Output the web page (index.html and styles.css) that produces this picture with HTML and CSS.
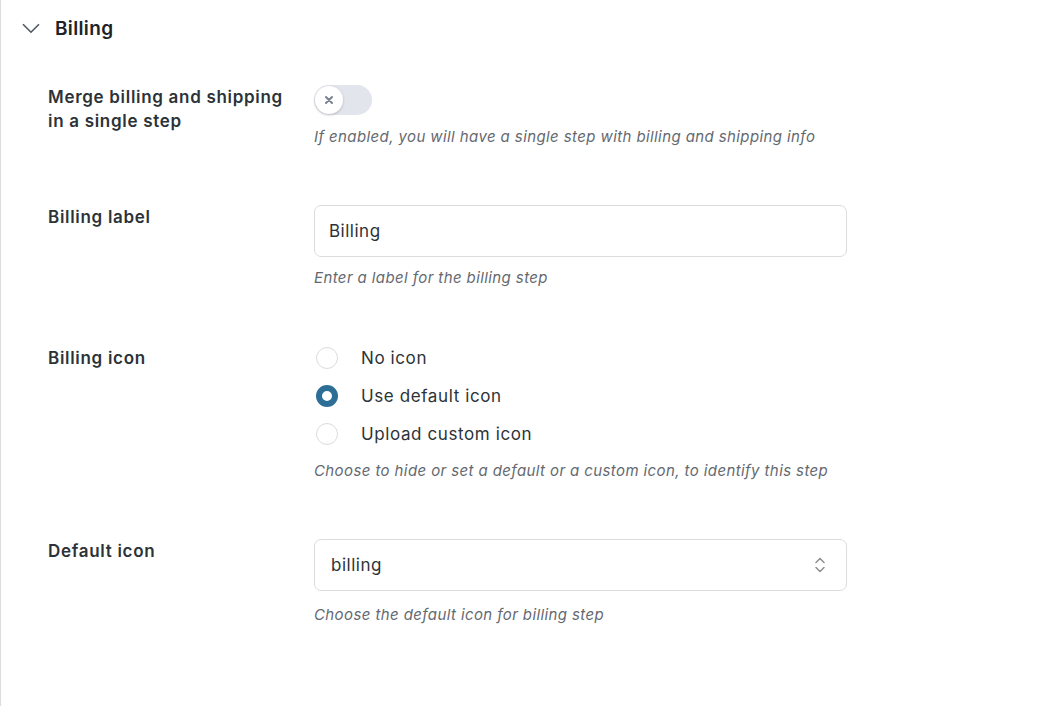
FILE: index.html
```html
<!DOCTYPE html>
<html lang="en">
<head>
<meta charset="utf-8">
<title>Billing settings</title>
<link rel="stylesheet" href="styles.css">
</head>
<body>
<div class="panel">
  <div class="section-head">
    <svg class="chevron" width="18" height="11" viewBox="0 0 18 11"><path d="M1 1.2 L9 9.2 L17 1.2" fill="none" stroke="#50575e" stroke-width="1.6"/></svg>
    <h2 class="section-title">Billing</h2>
  </div>

  <div class="rows">
    <div class="row">
      <div class="label">Merge billing and shipping in a single step</div>
      <div class="control">
        <span class="toggle"><span class="knob"><svg width="10" height="10" viewBox="0 0 10 10"><path d="M2 2 L8 8 M8 2 L2 8" stroke="#7a8190" stroke-width="2" stroke-linecap="round"/></svg></span></span>
        <p class="desc desc-toggle">If enabled, you will have a single step with billing and shipping info</p>
      </div>
    </div>

    <div class="row">
      <div class="label">Billing label</div>
      <div class="control">
        <div class="field">Billing</div>
        <p class="desc">Enter a label for the billing step</p>
      </div>
    </div>

    <div class="row">
      <div class="label label-radio">Billing icon</div>
      <div class="control">
        <ul class="radios">
          <li class="radio-item"><span class="radio"></span>No icon</li>
          <li class="radio-item"><span class="radio checked"></span>Use default icon</li>
          <li class="radio-item"><span class="radio"></span>Upload custom icon</li>
        </ul>
        <p class="desc desc-radio">Choose to hide or set a default or a custom icon, to identify this step</p>
      </div>
    </div>

    <div class="row">
      <div class="label">Default icon</div>
      <div class="control">
        <div class="field select">billing
          <svg class="updown" width="12" height="18" viewBox="0 0 12 18"><path d="M2 6.5 L6 2.5 L10 6.5 M2 11.5 L6 15.5 L10 11.5" fill="none" stroke="#8c8f94" stroke-width="1.5" stroke-linecap="round" stroke-linejoin="round"/></svg>
        </div>
        <p class="desc desc-select">Choose the default icon for billing step</p>
      </div>
    </div>
  </div>
</div>
</body>
</html>
```

FILE: styles.css
```css
html, body {
  margin: 0;
  padding: 0;
  background: #ffffff;
}
body {
  font-family: Inter, "Open Sans", "Liberation Sans", sans-serif;
  color: #2c3338;
  width: 1044px;
  height: 706px;
  overflow: hidden;
}
.panel {
  border-left: 1px solid #dcdcde;
  height: 706px;
  box-sizing: border-box;
  padding-left: 21px;
}
.section-head {
  display: flex;
  align-items: center;
  height: 56px;
  gap: 15px;
}
.chevron {
  display: block;
  margin-top: 1px;
}
.section-title {
  margin: 0;
  font-size: 19px;
  font-weight: 600;
  color: #1d2327;
  letter-spacing: 0.35px;
}
.rows {
  padding-left: 26px;
  padding-top: 29px;
  display: flex;
  flex-direction: column;
  gap: 58px;
}
.row {
  display: flex;
}
.label {
  width: 250px;
  margin-right: 16px;
  flex: none;
  font-size: 17px;
  font-weight: 600;
  line-height: 24px;
  color: #2c3338;
  letter-spacing: 0.7px;
}
.control {
  flex: none;
  width: 533px;
}
.toggle {
  display: block;
  width: 58px;
  height: 30px;
  border-radius: 15px;
  background: #e2e5ec;
  position: relative;
}
.knob {
  position: absolute;
  left: 1px;
  top: 1px;
  width: 28px;
  height: 28px;
  border-radius: 50%;
  background: #fff;
  box-shadow: 0 1px 3px rgba(0,0,0,0.2);
  display: flex;
  align-items: center;
  justify-content: center;
}
.knob svg { display: block; }
.desc {
  margin: 11px 0 0;
  font-size: 15px;
  font-style: italic;
  line-height: 20px;
  color: #646970;
  letter-spacing: 0.4px;
}
.desc-toggle { margin-top: 12px; }
.desc-select { margin-top: 14px; }
.field {
  box-sizing: border-box;
  height: 52px;
  border: 1px solid #dcdcde;
  border-radius: 7px;
  padding: 0 14px;
  display: flex;
  align-items: center;
  font-size: 17px;
  color: #2c3338;
  letter-spacing: 0.5px;
}
.select {
  justify-content: space-between;
  padding-left: 16px;
  padding-right: 20px;
}
.updown { display: block; }
.radios {
  list-style: none;
  margin: 0;
  padding: 0;
  display: flex;
  flex-direction: column;
  gap: 14px;
}
.radio-item {
  display: flex;
  align-items: center;
  height: 24px;
  font-size: 17px;
  color: #2c3338;
  letter-spacing: 0.6px;
}
.radio {
  box-sizing: border-box;
  width: 22px;
  height: 22px;
  border-radius: 50%;
  border: 1px solid #dcdcde;
  margin-left: 2px;
  margin-right: 23px;
  background: #fff;
}
.radio.checked {
  border: 6px solid #2c6e96;
  background: #fff;
}
.desc-radio { margin-top: 15px; }
```
